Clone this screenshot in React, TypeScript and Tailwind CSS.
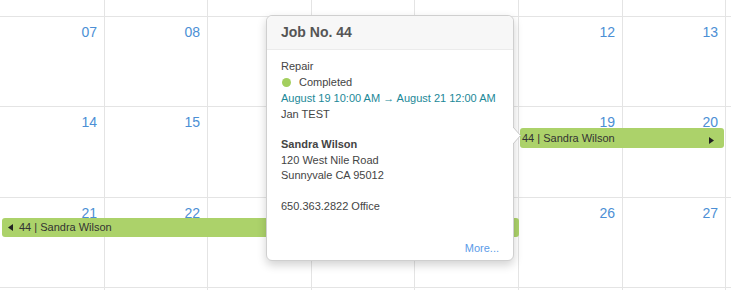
import React from 'react';

const cols = 'grid grid-cols-[105px_103px_104px_103px_104px_104px_103px_1fr]';

// days under the popover are hidden in the picture, so they are left blank
const weeks: { h: string; days: string[] }[] = [
  { h: 'h-[17px]', days: ['', '', '', '', '', '', '', ''] },
  { h: 'h-[90px]', days: ['07', '08', '', '', '', '12', '13', ''] },
  { h: 'h-[91px]', days: ['14', '15', '', '', '', '19', '20', ''] },
  { h: 'h-[90px]', days: ['21', '22', '', '', '', '26', '27', ''] },
  { h: 'h-[20px]', days: ['', '', '', '', '', '', '', ''] },
];

const EventBar = ({ className, left, right }: { className: string; left?: boolean; right?: boolean }) => (
  <div
    className={`absolute flex items-center rounded-[3px] bg-[#acd26a] text-[11px] text-[#333] ${className}`}
  >
    {left && (
      <svg width="5" height="7" viewBox="0 0 5 7" className="ml-[6px] mr-[6px]">
        <polygon points="5,0 0,3.5 5,7" fill="#222" />
      </svg>
    )}
    <span className={left ? '' : 'ml-[2px]'}>44 | Sandra Wilson</span>
    {right && (
      <svg width="5" height="7" viewBox="0 0 5 7" className="ml-auto mr-[10px] mt-[5px]">
        <polygon points="0,0 5,3.5 0,7" fill="#222" />
      </svg>
    )}
  </div>
);

const Popover = () => (
  <div className="absolute left-[266px] top-[15px] w-[248px] h-[246px] rounded-[6px] border border-[#cfcfcf] bg-white shadow-[0_4px_10px_rgba(0,0,0,0.18)]">
    <div className="h-[34px] flex items-center px-[14px] bg-[#f7f7f7] border-b border-[#ebebeb] rounded-t-[6px] text-[14px] font-bold text-[#555]">
      Job No. 44
    </div>
    <div className="px-[14px] text-[11px] text-[#444]">
      <div className="pt-[8px] leading-[16px]">
        <div>Repair</div>
        <div className="flex items-center">
          <span className="inline-block w-[9px] h-[9px] rounded-full bg-[#a3cf5e] mr-[8px] ml-[1px]" />
          Completed
        </div>
        <div className="text-[#1b8898]">August 19 10:00 AM → August 21 12:00 AM</div>
        <div>Jan TEST</div>
      </div>
      <div className="mt-[15px] leading-[15.5px]">
        <div className="font-bold">Sandra Wilson</div>
        <div>120 West Nile Road</div>
        <div>Sunnyvale CA 95012</div>
      </div>
      <div className="mt-[15px] leading-[15.5px]">650.363.2822 Office</div>
      <div className="mt-[26px] text-right text-[#5b9be8] leading-[16px]">More...</div>
    </div>
    <svg width="9" height="17" viewBox="0 0 9 17" className="absolute left-[246px] top-[111px]">
      <polygon points="0,0 7.5,8.5 0,17" fill="white" />
      <polyline points="0,0 7.5,8.5 0,17" fill="none" stroke="#c8c8c8" strokeWidth="1" />
    </svg>
  </div>
);

export default function App() {
  return (
    <div className="relative w-[731px] h-[290px] overflow-hidden bg-white font-['Liberation_Sans',Arial,sans-serif]">
      {weeks.map((w, i) => (
        <div key={i} className={`relative ${cols} ${w.h}`}>
          {w.days.map((d, j) => (
            <div
              key={j}
              className={`border-b border-[#e4e4e4] ${j < 7 ? 'border-r' : ''} text-right pr-[7px] pt-[7px] text-[14px] leading-[17px] text-[#4c8fd5]`}
            >
              {d}
            </div>
          ))}
          {i === 2 && <EventBar className="left-[520px] top-[21px] w-[204px] h-[20px]" right />}
          {i === 3 && <EventBar className="left-[2px] top-[20px] w-[517px] h-[19px]" left />}
        </div>
      ))}
      <Popover />
    </div>
  );
}
